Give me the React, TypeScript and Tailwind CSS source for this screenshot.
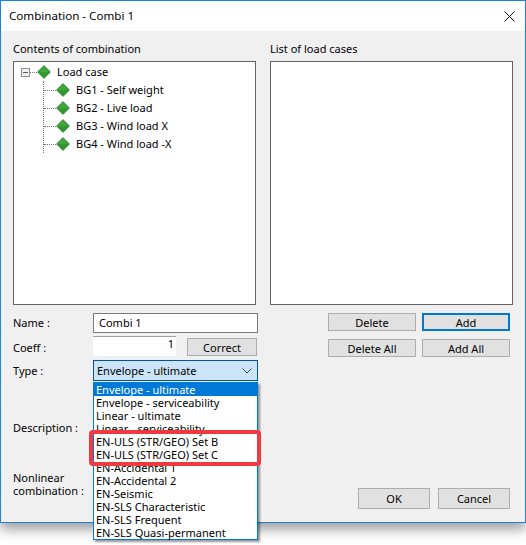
const uiFont = "font-['Noto_Sans',sans-serif]";

const items = [
  'Envelope - ultimate',
  'Envelope - serviceability',
  'Linear - ultimate',
  'Linear - serviceability',
  'EN-ULS (STR/GEO) Set B',
  'EN-ULS (STR/GEO) Set C',
  'EN-Accidental 1',
  'EN-Accidental 2',
  'EN-Seismic',
  'EN-SLS Characteristic',
  'EN-SLS Frequent',
  'EN-SLS Quasi-permanent',
];

const loadCases = ['BG1 - Self weight', 'BG2 - Live load', 'BG3 - Wind load X', 'BG4 - Wind load -X'];

function Diamond() {
  return (
    <svg width="14" height="14" viewBox="0 0 14 14" className="shrink-0">
      <path d="M7 0.5 L13.5 7 L7 13.5 L0.5 7 Z" fill="#2f962f" stroke="#247a2a" strokeWidth="0.6" />
      <path d="M7 1.5 L12.5 7 L7 7.5 L1.5 7 Z" fill="#3fa83a" />
    </svg>
  );
}

function Btn({ label, className, focused }: { label: string; className: string; focused?: boolean }) {
  return (
    <button
      className={`flex items-center justify-center bg-[#e1e1e1] text-[11px] leading-none text-black ${
        focused ? 'border-2 border-[#0078d7]' : 'border border-[#adadad]'
      } ${className}`}
    >
      {label}
    </button>
  );
}

export default function App() {
  return (
    <div className={`h-[545px] w-[526px] overflow-hidden bg-white ${uiFont}`}>
      <div className="relative flex h-[523px] w-[526px] flex-col border border-[#1883d7] bg-[#f0f0f0] shadow-[0_6px_12px_rgba(0,0,0,0.4)]">
        {/* Title bar */}
        <div className="flex h-[30px] shrink-0 items-center justify-between bg-white pl-[8px] pr-[10px] text-[11.6px] text-black">
          <span>Combination - Combi 1</span>
          <svg width="11" height="11" viewBox="0 0 11 11">
            <path d="M0.5 0.5 L10.5 10.5 M10.5 0.5 L0.5 10.5" stroke="#111" strokeWidth="1" />
          </svg>
        </div>

        {/* Lists */}
        <div className="flex pl-[12px] pt-[9px]">
          <div className="w-[243px]">
            <div className="h-[21px] text-[11px] leading-[17px] text-black">Contents of combination</div>
            <div className="h-[244px] border border-[#646464] bg-white pl-[7px] pt-[1px] text-[11px] text-black">
              <div className="flex h-[18px] items-center">
                <span className="flex h-[9px] w-[9px] items-center justify-center border border-[#8e8f8f] bg-[#f0f0f0]">
                  <span className="h-px w-[5px] bg-[#4a5a80]" />
                </span>
                <span className="w-[7px] border-t border-dotted border-[#777]" />
                <Diamond />
                <span className="ml-[6px] pt-px">Load case</span>
              </div>
              <div className="ml-[22px] border-l border-dotted border-[#777]">
                {loadCases.map((c, i) => (
                  <div key={c} className={`flex h-[18px] items-center ${i === 3 ? 'mb-[-9px]' : ''}`}>
                    <span className="w-[12px] border-t border-dotted border-[#777]" />
                    <Diamond />
                    <span className="ml-[6px] pt-px">{c}</span>
                  </div>
                ))}
              </div>
            </div>
          </div>
          <div className="ml-[14px] w-[243px]">
            <div className="h-[21px] text-[11px] leading-[17px] text-black">List of load cases</div>
            <div className="h-[244px] border border-[#646464] bg-white" />
          </div>
        </div>

        {/* Form and buttons */}
        <div className="relative flex flex-1 pl-[12px]">
          <div className="w-[245px] pt-[8px] text-[11px] text-black">
            <div className="flex h-[20px] items-center">
              <span className="w-[80px] pt-px">Name :</span>
              <div className="flex h-[20px] w-[165px] items-center border border-[#7a7a7a] bg-white pl-[5px] pt-px">Combi 1</div>
            </div>
            <div className="mt-[3px] flex h-[20px] items-center">
              <span className="w-[80px] pt-[5px]">Coeff :</span>
              <div className="flex h-[20px] w-[83px] justify-end border-t border-[#a0a0a0] bg-white pr-[2px] leading-[14px]">1</div>
              <Btn label="Correct" className="ml-[11px] mt-[2px] h-[18px] w-[70px]" />
            </div>
            <div className="mt-[4px] flex h-[21px] items-center">
              <span className="w-[80px] pt-px">Type :</span>
              <div className="flex h-[21px] w-[165px] items-center justify-between border border-[#005499] bg-[#cce4f7] pl-[3px] pr-[5px] pt-px">
                <span>Envelope - ultimate</span>
                <svg width="10" height="6" viewBox="0 0 10 6">
                  <path d="M0.5 0.5 L5 5 L9.5 0.5" fill="none" stroke="#444" />
                </svg>
              </div>
            </div>
            <div className="mt-[38px] h-[17px] leading-[17px]">Description :</div>
            <div className="mt-[35px] leading-[13px]">
              Nonlinear
              <br />
              combination :
            </div>
          </div>

          <div className="ml-[70px] w-[182px] pt-[8px]">
            <div className="flex gap-[6px]">
              <Btn label="Delete" className="h-[18px] w-[88px]" />
              <Btn label="Add" focused className="h-[18px] w-[88px]" />
            </div>
            <div className="mt-[8px] flex gap-[6px]">
              <Btn label="Delete All" className="h-[18px] w-[88px]" />
              <Btn label="Add All" className="h-[18px] w-[88px]" />
            </div>
            <div className="ml-[30px] mt-[131px] flex gap-[8px]">
              <Btn label="OK" className="h-[21px] w-[73px]" />
              <Btn label="Cancel" className="h-[21px] w-[73px]" />
            </div>
          </div>
        </div>

        {/* Open dropdown list */}
        <div className="absolute left-[92px] top-[381px] z-10 h-[158px] w-[165px] border border-[#0078d7] bg-white text-[11px] text-black shadow-[2px_2px_2px_rgba(0,0,0,0.4)]">
          {items.map((item, i) => (
            <div
              key={item}
              className={`h-[13px] whitespace-nowrap pl-[2px] leading-[13px] ${i === 0 ? 'bg-[#0078d7] text-white' : ''}`}
            >
              {item}
            </div>
          ))}
        </div>

        {/* Red highlight */}
        <div className="absolute left-[88px] top-[429px] z-20 h-[36px] w-[172px] rounded-[4px] border-[4px] border-[#ef3a3f]" />
      </div>
    </div>
  );
}
